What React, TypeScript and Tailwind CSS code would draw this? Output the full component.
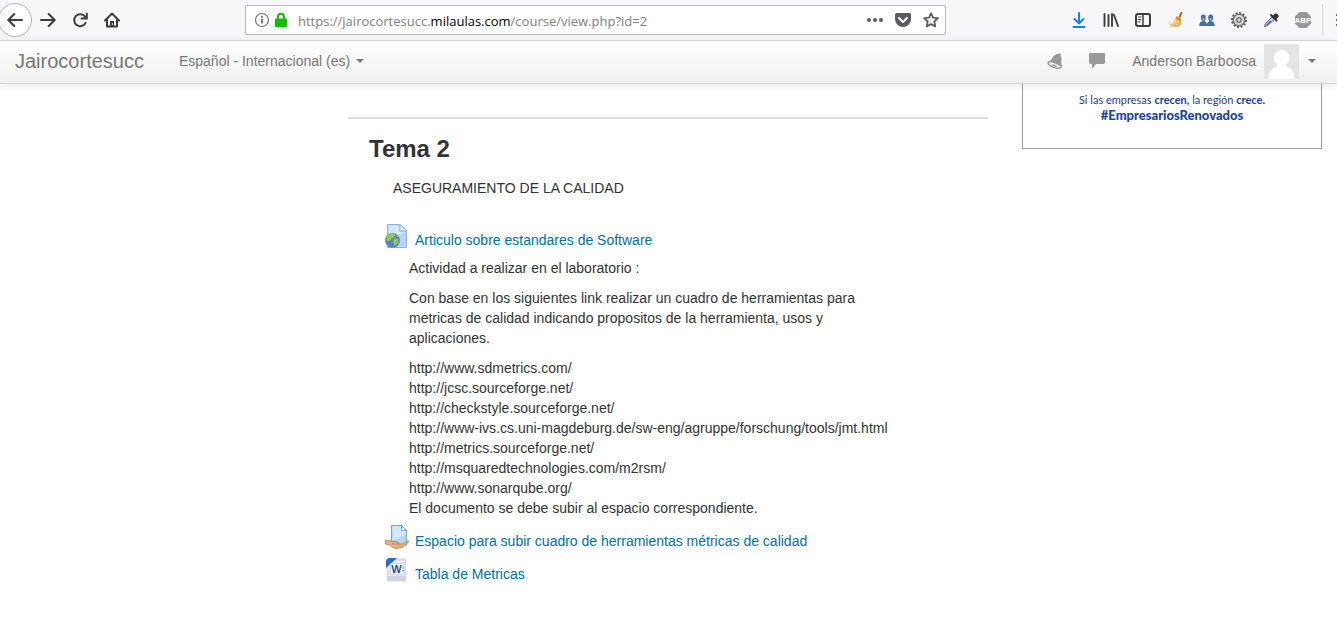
import React from "react";

type IconProps = { className?: string };

const stroke = {
  fill: "none",
  stroke: "currentColor",
  strokeWidth: 2,
  strokeLinecap: "round" as const,
  strokeLinejoin: "round" as const,
};

const BackIcon = () => (
  <svg viewBox="0 0 16 16" className="size-4" {...stroke}>
    <path d="M15 8H1.500M7.300 2 1.300 8l6 6" />
  </svg>
);

const ForwardIcon = () => (
  <svg viewBox="0 0 16 16" className="size-4" {...stroke}>
    <path d="M1 8h13.500M8.700 2l6 6-6 6" />
  </svg>
);

const ReloadIcon = () => (
  <svg viewBox="0 0 16 16" className="size-4" {...stroke}>
    <path d="M13 4.500A6 6 0 1 0 13.500 11" />
    <path d="M14.800 1.500v5H9.500" strokeLinejoin="miter" />
    <path d="M15 2.500v4h-4z" fill="currentColor" stroke="none" />
  </svg>
);

const HomeIcon = () => (
  <svg viewBox="0 0 16 16" className="size-4" {...stroke}>
    <path d="M1 8.500 8 1.500l7 7" />
    <path d="M3 8v6.500h10V8" />
    <path d="M6 15V9h4v6z" fill="currentColor" stroke="none" />
    <path d="M8.300 11.500v1" stroke="#fff" strokeWidth="1" />
  </svg>
);

const InfoIcon = () => (
  <svg viewBox="0 0 16 16" className="size-4 shrink-0 text-[#737373]" fill="none" stroke="currentColor">
    <circle cx="8" cy="8" r="6.500" strokeWidth="1.200" />
    <path d="M8 7v4.500" strokeWidth="1.800" />
    <circle cx="8" cy="4.800" r="1.100" fill="currentColor" stroke="none" />
  </svg>
);

const LockIcon = () => (
  <svg viewBox="0 0 14 16" className="h-4 w-[14px] shrink-0">
    <path d="M4 8V4.800a3 3 0 0 1 6 0V8" fill="none" stroke="#12bc00" strokeWidth="2" />
    <rect x="1" y="6.500" width="12" height="8.500" rx="1" fill="#12bc00" />
  </svg>
);

const DotsIcon = () => (
  <svg viewBox="0 0 16 16" className="size-4" fill="currentColor">
    <circle cx="2" cy="8" r="2" />
    <circle cx="8" cy="8" r="2" />
    <circle cx="14" cy="8" r="2" />
  </svg>
);

const PocketIcon = () => (
  <svg viewBox="0 0 16 16" className="size-4">
    <path d="M1.500 1h13A1.500 1.500 0 0 1 16 2.500V7A8 8 0 0 1 0 7V2.500A1.500 1.500 0 0 1 1.500 1z" fill="currentColor" />
    <path d="m4 6 4 4 4-4" fill="none" stroke="#fff" strokeWidth="2" strokeLinecap="round" strokeLinejoin="round" />
  </svg>
);

const StarIcon = () => (
  <svg viewBox="0 0 16 16" className="size-4" {...stroke} strokeWidth={1.8}>
    <path d="m8 1.300 2 4.400 4.900.5-3.600 3.300 1 4.900L8 12l-4.300 2.400 1-4.900L1.100 6.200 6 5.700z" />
  </svg>
);

const DownloadIcon = () => (
  <svg viewBox="0 0 16 16" className="size-4 text-[#0a84ff]" {...stroke}>
    <path d="M8 1v10M3.500 7 8 11.200 12.500 7M2.500 15h11" />
  </svg>
);

const LibraryIcon = () => (
  <svg viewBox="0 0 16 16" className="size-4" {...stroke}>
    <path d="M1.500 2v12M5.500 3v11M9 2v12M11 3l4 11" strokeWidth="1.900" />
  </svg>
);

const SidebarIcon = () => (
  <svg viewBox="0 0 16 16" className="size-4" {...stroke}>
    <rect x="1" y="2" width="14" height="12" rx="2" />
    <path d="M8 2v12" strokeWidth="1.500" />
    <path d="M3.500 5h2.500M3.500 7.500h2.500M3.500 10h1.500" strokeWidth="1" />
  </svg>
);

const BroomIcon = () => (
  <svg viewBox="0 0 16 16" className="size-4">
    <path d="m14.500 1-2.500 5" stroke="#b0662a" strokeWidth="2" strokeLinecap="round" />
    <path d="M9.500 4 14 6.500 14.500 11c-.5 2.500-3 4-5.500 4L2.500 13.500C6 12 7.500 9 9.500 4z" fill="#eeb04a" />
    <path d="m9 5.500 5 3" stroke="#c97a2e" strokeWidth="1.300" />
    <path d="M9.500 8 6 13m5.500-4L9.500 13.500" stroke="#fbe08e" strokeWidth="1.400" />
    <path d="m1 10 3 1-2 1 3 1.500-2 1 4 .5" fill="none" stroke="#ded8b0" />
  </svg>
);

const PeopleIcon = () => (
  <svg viewBox="0 0 16 16" className="size-4">
    <g fill="#4d7196">
      <path d="M.5 14c0-3 .5-4 2.600-4.400L2 6.500C1.500 4 2.500 2.500 4.300 2.500S7.200 4 6.700 6.500L5.800 9.600C7.600 10 8 11 8 14z" />
      <path d="M8 14c0-3 .4-4 2.200-4.400L9.200 6.500c-.4-2.500.6-4 2.500-4s2.900 1.500 2.400 4l-1.100 3.100C15 10 15.500 11 15.500 14z" />
    </g>
    <path d="M3.500 6h1.800v2.500l-.9 1-.9-1zM10.800 6h1.800v2.500l-.9 1-.9-1z" fill="#a4a9a8" />
    <path d="M.5 12.800h15" stroke="#3976af" strokeWidth="1.500" />
  </svg>
);

const GearIcon = () => (
  <svg viewBox="0 0 16 16" className="size-4">
    <circle cx="8" cy="8" r="7" fill="none" stroke="#5a5a5a" strokeWidth="2" strokeDasharray="2 1.660" />
    <circle cx="8" cy="8" r="6" fill="#a9a9a9" stroke="#5e5e5e" />
    <circle cx="8" cy="8" r="4" fill="none" stroke="#dedede" strokeWidth="1.500" />
    <circle cx="8" cy="8" r="2.200" fill="#ddd" stroke="#5c5c5c" />
  </svg>
);

const DropperIcon = () => (
  <svg viewBox="0 0 16 16" className="size-4">
    <path d="m1.500 14.500 1-3L9 5l2.300 2.300-6.500 6.200z" fill="#c3cfea" stroke="#555f83" />
    <path d="m3 13 4-4.300 1.700.8L4.500 13z" fill="#4263bd" />
    <path d="m8 3 5.500 5.500M10 5l2.500-2.500a1.700 1.700 0 0 1 2 2L12 7z" fill="#343434" stroke="#343434" strokeWidth="2" strokeLinecap="round" />
  </svg>
);

const AbpIcon = () => (
  <svg viewBox="0 0 18 18" className="size-[18px]">
    <path d="M5.500 1h7L17 5.500v7L12.500 17h-7L1 12.500v-7z" fill="#969696" />
    <text x="9" y="12" textAnchor="middle" fontSize="8" fontWeight="700" fontFamily="Liberation Sans Narrow, Liberation Sans, sans-serif" fill="#fff">
      ABP
    </text>
  </svg>
);

const MenuIcon = () => (
  <svg viewBox="0 0 16 16" className="size-4 shrink-0" {...stroke}>
    <path d="M2 3h12M2 8h12M2 13h12" />
  </svg>
);

const BellIcon = () => (
  <svg viewBox="0 0 16 16" className="size-4">
    <path d="M11.500.7c1.300-.7 2.800.3 2.200 1.800 1.200 2 .8 4 .6 6-.2 2 .3 3.500.7 5C11 14.500 3 12 .8 8.800c2-.7 3.200-1.800 4.200-3.600C6.300 2.700 8.500 1 11.500.7z" fill="#999" />
    <path d="M1.200 9c-1 2 2.500 4.600 6 5.600 3.200.9 6.600.8 7.200-1.100C13 11.500 4 7.500 1.200 9z" fill="#eee" stroke="#999" strokeWidth="1.400" />
    <path d="M4.500 11c.4 2.300 4.500 3.800 6 1.700z" fill="#999" />
  </svg>
);

const MessageIcon = () => (
  <svg viewBox="0 0 16 16" className="size-4">
    <path d="M1 0h14q1 0 1 1v9q0 1-1 1H7l-4 5v-5H1q-1 0-1-1V1q0-1 1-1z" fill="#999" />
  </svg>
);

const Avatar = () => (
  <svg viewBox="0 0 35 35" className="size-[35px]">
    <path d="M0 0h35v35H0z" fill="#e4e4e4" />
    <path d="M4.500 35c0-6 3-11 8-12.500 1-.4 1-1.500 0-2.300-2-1.700-2.700-4-2.700-6.200 0-5 3.200-8 7.700-8s7.700 3 7.700 8c0 2.200-.7 4.500-2.700 6.200-1 .8-1 1.900 0 2.300 5 1.500 8 6.500 8 12.500z" fill="#fff" />
  </svg>
);

const Caret = () => (
  <svg viewBox="0 0 8 4" className="h-1 w-2 shrink-0" fill="#777">
    <path d="M0 0h8L4 4z" />
  </svg>
);

const PagePath = () => (
  <>
    <path d="M2.500.5H15L21.500 7v16.500h-19z" fill="#b9d5f5" stroke="#8bb3e0" />
    <path d="M3.500 1.500H14V8h7L4 15z" fill="#d3e7fb" />
    <path d="M15 .5V7h6.500z" fill="#f2f8ff" stroke="#8bb3e0" />
  </>
);

const UrlResourceIcon = ({ className }: IconProps) => (
  <svg viewBox="0 0 24 24" className={className}>
    <PagePath />
    <circle cx="7.500" cy="16.500" r="7.300" fill="#5584c8" stroke="#7198cc" strokeWidth=".5" />
    <path d="M2 12.500c2-2.800 5.500-3.500 8-2l.5 1.500-2 .5 1 1.500-3 .5-1.500 2-2.500.5L1 16z" fill="#9ccb3b" />
    <path d="m8 16 3-1.500 2.500 1-1 3.500-2.500 3-1.500-2.500zM11.500 11l2 2-1.500.5z" fill="#9ccb3b" />
  </svg>
);

const AssignmentIcon = ({ className }: IconProps) => (
  <svg viewBox="0 0 24 24" className={className}>
    <path d="M6.500.5h10l5 5V20h-15z" fill="#b6d6f6" stroke="#75a8de" />
    <path d="M7.500 1.500H16V6h5v4L8 15z" fill="#d3e8fb" />
    <path d="M16.500.5v5h5z" fill="#f2f8ff" stroke="#75a8de" />
    <path d="M.5 15.500c2-.7 4-.3 6 .9l6 .4c1.500.3 1.500 2-.3 2l5 .2 5-3c1.500-.5 2 .5 1 1.500L18 22l-6 1.500c-3 0-5-1-7.500-3.500L.5 19z" fill="#e6b17c" stroke="#b98555" strokeWidth=".8" />
    <path d="M7 19h8" stroke="#bd8651" strokeWidth=".8" />
  </svg>
);

const WordIcon = ({ className }: IconProps) => (
  <svg viewBox="0 0 24 24" className={className}>
    <path d="M2.500 1h18v22h-18z" fill="#e6e7ef" stroke="#d3d4dd" />
    <path d="M3 18h17v4.500H3z" fill="#d0d1dc" />
    <path d="M1 10V4q0-4 4-4h7z" fill="#1f72c4" />
    <path d="M5.500 5.500h13v11h-13z" fill="#fff" stroke="#c9d6ec" />
    <text x="11.500" y="14.500" textAnchor="middle" fontSize="11" fontWeight="700" fontFamily="Liberation Sans, sans-serif" fill="#2452a8">
      W
    </text>
    <path d="M17 10h2m-2 2.500h2" stroke="#7e9bce" />
  </svg>
);

function ToolButton({ label, children }: { label: string; children: React.ReactNode }) {
  return (
    <button type="button" aria-label={label} className="flex size-8 shrink-0 items-center justify-center">
      {children}
    </button>
  );
}

function BarButton({ label, children }: { label: string; children: React.ReactNode }) {
  return (
    <button type="button" aria-label={label} className="flex w-7 shrink-0 items-center justify-center text-[#5c5c5e]">
      {children}
    </button>
  );
}

function BrowserBar() {
  return (
    <div className="flex h-[41px] items-center overflow-hidden border-b border-[#dcdcde] bg-[#f8f8fa] text-[#3c3c3e]">
      <div className="flex shrink-0 items-center">
        <button
          type="button"
          aria-label="Atrás"
          className="-ml-0.5 flex size-[34px] items-center justify-center rounded-full border border-[#b5b5b7] bg-white"
        >
          <BackIcon />
        </button>
        <ToolButton label="Adelante"><ForwardIcon /></ToolButton>
        <ToolButton label="Recargar"><ReloadIcon /></ToolButton>
        <ToolButton label="Inicio"><HomeIcon /></ToolButton>
      </div>
      <div className="mx-[117px] flex h-[30px] min-w-0 flex-1 items-center rounded-xs border border-[#b9b9bb] bg-white pl-2">
        <InfoIcon />
        <span className="ml-1 flex"><LockIcon /></span>
        <a
          href="https://jairocortesucc.milaulas.com/course/view.php?id=2"
          className="ml-2.5 min-w-0 flex-1 truncate pt-0.5 font-['Open_Sans','Noto_Sans',sans-serif] text-[13px] leading-5 text-[#808080]"
        >
          https://jairocortesucc.<span className="text-black">milaulas.com</span>/course/view.php?id=2
        </a>
        <BarButton label="Acciones de página"><DotsIcon /></BarButton>
        <BarButton label="Guardar en Pocket"><PocketIcon /></BarButton>
        <BarButton label="Añadir a marcadores"><StarIcon /></BarButton>
      </div>
      <div className="flex shrink-0 items-center">
        <ToolButton label="Descargas"><DownloadIcon /></ToolButton>
        <ToolButton label="Biblioteca"><LibraryIcon /></ToolButton>
        <ToolButton label="Barra lateral"><SidebarIcon /></ToolButton>
        <ToolButton label="Limpiar"><BroomIcon /></ToolButton>
        <ToolButton label="Usuarios"><PeopleIcon /></ToolButton>
        <ToolButton label="Opciones"><GearIcon /></ToolButton>
        <ToolButton label="Cuentagotas"><DropperIcon /></ToolButton>
        <ToolButton label="Adblock Plus"><AbpIcon /></ToolButton>
        <div className="ml-[3px] h-8 w-px bg-[#d8d8da]" />
        <button type="button" aria-label="Menú" className="flex w-[14px] overflow-hidden pl-3">
          <MenuIcon />
        </button>
      </div>
    </div>
  );
}

function SiteHeader() {
  return (
    <header className="relative flex h-[43px] items-center border-b border-[#d4d4d4] bg-linear-to-b from-white to-[#f0f0f0] pr-[21px] pb-0.5 pl-[15px] text-sm text-[#777] shadow-[0_1px_10px_rgba(0,0,0,0.1)]">
      <a href="#inicio" className="text-xl leading-5">Jairocortesucc</a>
      <button type="button" className="ml-[35px] flex items-center gap-1.5 leading-5">
        Español - Internacional (es)
        <Caret />
      </button>
      <div className="ml-auto flex items-center">
        <button type="button" aria-label="Notificaciones"><BellIcon /></button>
        <button type="button" aria-label="Mensajes" className="ml-[26px]"><MessageIcon /></button>
        <button type="button" className="ml-[27px] flex items-center leading-5">
          Anderson Barboosa
          <span className="mr-[9px] ml-2"><Avatar /></span>
          <Caret />
        </button>
      </div>
    </header>
  );
}

const toolLinks = [
  "http://www.sdmetrics.com/",
  "http://jcsc.sourceforge.net/",
  "http://checkstyle.sourceforge.net/",
  "http://www-ivs.cs.uni-magdeburg.de/sw-eng/agruppe/forschung/tools/jmt.html",
  "http://metrics.sourceforge.net/",
  "http://msquaredtechnologies.com/m2rsm/",
  "http://www.sonarqube.org/",
  "El documento se debe subir al espacio correspondiente.",
];

function Activity({ icon, title, children }: { icon: React.ReactNode; title: string; children?: React.ReactNode }) {
  return (
    <li>
      <a href="#actividad" className="flex items-end gap-1.5 text-[#0070a8]">
        <span className="mb-0.5">{icon}</span>
        {title}
      </a>
      {children}
    </li>
  );
}

export default function App() {
  return (
    <div className="min-h-screen bg-white font-['Liberation_Sans',Arial,sans-serif] text-sm leading-5 text-[#333]">
      <BrowserBar />
      <SiteHeader />
      <div className="grid grid-cols-[minmax(0,314px)_minmax(0,640px)_300px] justify-end gap-x-[34px] pr-[15px]">
        <main className="col-start-2 mt-[33px] border-t-2 border-[#ddd] pl-[21px]">
          <h2 className="mt-2.5 text-2xl leading-10 font-bold">Tema 2</h2>
          <p className="mt-[9px] pl-6">ASEGURAMIENTO DE LA CALIDAD</p>
          <ul className="mt-[26px] flex flex-col gap-[7px] pl-4">
            <Activity icon={<UrlResourceIcon className="size-6" />} title="Articulo sobre estandares de Software">
              <div className="mt-2 pl-6">
                <p>Actividad a realizar en el laboratorio :</p>
                <p className="mt-2.5 max-w-[480px]">
                  Con base en los siguientes link realizar un cuadro de herramientas para metricas de calidad indicando
                  propositos de la herramienta, usos y aplicaciones.
                </p>
                <div className="mt-2.5">
                  {toolLinks.map((line) => (
                    <p key={line}>{line}</p>
                  ))}
                </div>
              </div>
            </Activity>
            <Activity
              icon={<AssignmentIcon className="size-6" />}
              title="Espacio para subir cuadro de herramientas métricas de calidad"
            />
            <Activity icon={<WordIcon className="size-6" />} title="Tabla de Metricas" />
          </ul>
        </main>
        <aside className="h-[65px] border border-t-0 border-[#a0a0a0] pt-2 text-center font-['Lato','Noto_Sans',sans-serif] text-[11px] leading-4 text-[#21408e]">
          <p>
            Si las empresas <b>crecen,</b> la región <b>crece.</b>
          </p>
          <p className="text-[13px] leading-[15px] font-black text-[#1c459b]">#EmpresariosRenovados</p>
        </aside>
      </div>
    </div>
  );
}
